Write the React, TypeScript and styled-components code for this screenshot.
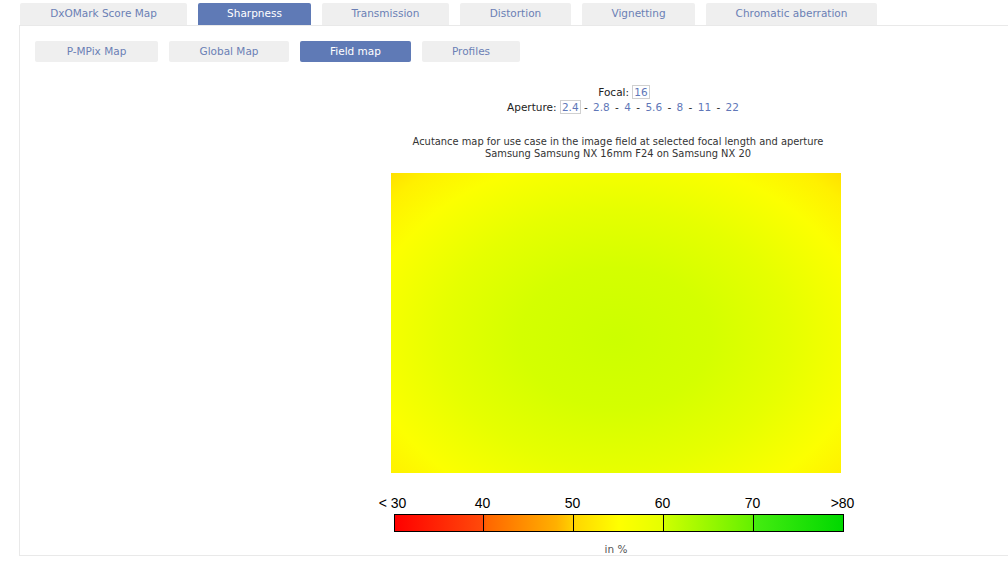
import styled, { createGlobalStyle } from "styled-components";

const GlobalStyle = createGlobalStyle`
  html, body {
    margin: 0;
    padding: 0;
    background: #fff;
    overflow: hidden;
  }
  body {
    font-family: "DejaVu Sans", Verdana, sans-serif;
  }
`;

const mainTabs = [
  { label: "DxOMark Score Map", w: 167 },
  { label: "Sharpness", w: 113, active: true },
  { label: "Transmission", w: 127 },
  { label: "Distortion", w: 111 },
  { label: "Vignetting", w: 113 },
  { label: "Chromatic aberration", w: 171 },
];

const subTabs = [
  { label: "P-MPix Map", w: 123 },
  { label: "Global Map", w: 120 },
  { label: "Field map", w: 111, active: true },
  { label: "Profiles", w: 98 },
];

const apertures = ["2.4", "2.8", "4", "5.6", "8", "11", "22"];
const legend = ["< 30", "40", "50", "60", "70", ">80"];

const App = () => {
  return (
    <Page>
      <GlobalStyle />
      <TabBar>
        {mainTabs.map((t) => (
          <Tab key={t.label} $w={t.w} $active={!!t.active}>
            {t.label}
          </Tab>
        ))}
      </TabBar>
      <Panel>
        <SubBar>
          {subTabs.map((t) => (
            <SubTab key={t.label} $w={t.w} $active={!!t.active}>
              {t.label}
            </SubTab>
          ))}
        </SubBar>
        <Content>
          <Selector>
            <Line>
              Focal: <Choice $selected>16</Choice>
            </Line>
            <Line>
              Aperture:{" "}
              {apertures.map((a, idx) => (
                <span key={a}>
                  <Choice $selected={idx === 0}>{a}</Choice>
                  {idx < apertures.length - 1 && <Dash> - </Dash>}
                </span>
              ))}
            </Line>
          </Selector>
          <Caption>
            Acutance map for use case in the image field at selected focal length and aperture
            <br />
            Samsung Samsung NX 16mm F24 on Samsung NX 20
          </Caption>
          <FieldMap />
          <Legend>
            <Labels>
              {legend.map((l) => (
                <Label key={l}>
                  <span>{l}</span>
                </Label>
              ))}
            </Labels>
            <Bar>
              {legend.slice(1).map((l) => (
                <Segment key={l} />
              ))}
            </Bar>
            <Unit>in %</Unit>
          </Legend>
        </Content>
      </Panel>
    </Page>
  );
};

const Page = styled.div`
  padding-top: 3px;
  width: 1008px;
  height: 579px;
  overflow: hidden;
`;

const TabBar = styled.div`
  display: flex;
  gap: 11px;
  margin-left: 20px;
  height: 22px;
`;

const Tab = styled.div<{ $w: number; $active: boolean }>`
  width: ${(p) => p.$w}px;
  height: 22px;
  display: flex;
  align-items: center;
  justify-content: center;
  font-size: 10.5px;
  border-radius: 2px 2px 0 0;
  background: ${(p) => (p.$active ? "#5f7ab6" : "#efefef")};
  color: ${(p) => (p.$active ? "#fff" : "#6b7fb5")};
  padding-bottom: 2px;
  box-sizing: border-box;
`;

const Panel = styled.div`
  margin-left: 19px;
  width: 1194px;
  height: 531px;
  border: 1px solid #e9e9e9;
  box-sizing: border-box;
  display: flex;
  flex-direction: column;
`;

const SubBar = styled.div`
  display: flex;
  gap: 11px;
  padding: 15px 15px 0;
`;

const SubTab = styled.div<{ $w: number; $active: boolean }>`
  width: ${(p) => p.$w}px;
  height: 21px;
  display: flex;
  align-items: center;
  justify-content: center;
  font-size: 10.5px;
  border-radius: 2px;
  background: ${(p) => (p.$active ? "#5f7ab6" : "#efefef")};
  color: ${(p) => (p.$active ? "#fff" : "#6b7fb5")};
  padding-bottom: 1px;
  box-sizing: border-box;
`;

const Content = styled.div`
  display: flex;
  flex-direction: column;
  align-items: center;
`;

const Selector = styled.div`
  margin-top: 23px;
  margin-left: 16px;
  display: flex;
  flex-direction: column;
  align-items: center;
  font-size: 10.5px;
  color: #222;
`;

const Line = styled.div`
  line-height: 15px;
  white-space: pre;
`;

const Choice = styled.span<{ $selected?: boolean }>`
  color: #6077b8;
  padding: 0 1px;
  border: 1px solid ${(p) => (p.$selected ? "#d0d0d0" : "transparent")};
`;

const Dash = styled.span`
  color: #222;
`;

const Caption = styled.div`
  margin-top: 21px;
  margin-left: 4px;
  font-size: 9.9px;
  line-height: 12px;
  color: #333;
  text-align: center;
`;

const FieldMap = styled.div`
  margin-top: 13px;
  width: 450px;
  height: 300px;
  background: radial-gradient(
    ellipse farthest-corner at 50% 55%,
    #ccff00 0%,
    #d4ff00 30%,
    #e6ff00 55%,
    #fcff00 78%,
    #fff000 92%,
    #ffe000 100%
  );
`;

const Legend = styled.div`
  margin-top: 22px;
  width: 450px;
  display: flex;
  flex-direction: column;
  align-items: center;
  font-family: "Liberation Sans", Arial, sans-serif;
`;

const Labels = styled.div`
  width: 450px;
  display: flex;
  justify-content: space-between;
  height: 16px;
  margin-left: 3px;
`;

const Label = styled.div`
  width: 0;
  display: flex;
  justify-content: center;
  font-size: 14px;
  line-height: 16px;
  color: #000;
  white-space: nowrap;
`;

const Bar = styled.div`
  margin-top: 3px;
  margin-left: 5px;
  width: 450px;
  height: 18px;
  border: 1px solid #000;
  box-sizing: border-box;
  display: flex;
  background: linear-gradient(
    to right,
    #ff0000 0%,
    #ff4a0a 19.5%,
    #ff6600 20.5%,
    #ffb000 36%,
    #ffd800 40.5%,
    #ffff00 50%,
    #e6ff00 59.5%,
    #ccff00 60.5%,
    #66f000 79.5%,
    #44ec10 80.5%,
    #00d800 100%
  );
`;

const Segment = styled.div`
  flex: 1;
  border-right: 1px solid #000;
  &:last-child {
    border-right: none;
  }
`;

const Unit = styled.div`
  margin-top: 11px;
  font-family: "DejaVu Sans", Verdana, sans-serif;
  font-size: 10.5px;
  color: #555;
`;

export default App;
